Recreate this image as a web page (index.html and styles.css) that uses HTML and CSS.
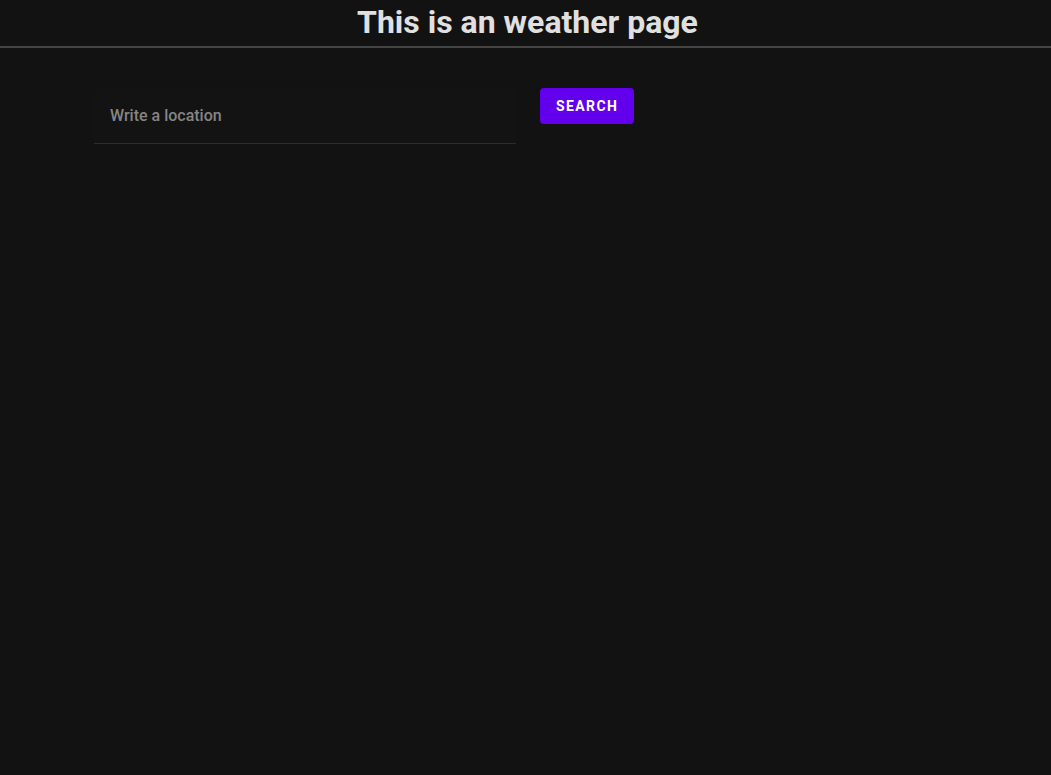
FILE: index.html
```html
<!DOCTYPE html>
<html>
<head>
<meta charset="utf-8">
<link rel="stylesheet" href="styles.css">
</head>
<body>
<header class="header">
  <h1 class="title">This is an weather page</h1>
</header>
<main class="main">
  <div class="field">
    <input class="field-input" type="text" placeholder="Write a location">
  </div>
  <button class="btn">Search</button>
</main>
</body>
</html>
```
FILE: styles.css
```css
html, body {
  margin: 0;
  padding: 0;
  background: #121212;
  height: 100%;
}
body {
  font-family: Roboto, "Liberation Sans", sans-serif;
  color: #e0e0e0;
}
.header {
  border-bottom: 2px solid #444444;
  display: flex;
  justify-content: center;
  align-items: center;
  box-sizing: border-box;
  height: 48px;
  padding-left: 4px;
}
.title {
  margin: 0;
  font-size: 32px;
  font-weight: 700;
  color: #e0e0e0;
  line-height: 1;
  padding-bottom: 3px;
}
.main {
  display: flex;
  align-items: flex-start;
  gap: 24px;
  padding: 40px 94px;
}
.field {
  width: 422px;
  height: 56px;
  background: #131313;
  border-bottom: 1px solid #2c2c2c;
  box-sizing: border-box;
  border-radius: 4px 4px 0 0;
  display: flex;
}
.field-input {
  flex: 1;
  background: transparent;
  border: none;
  outline: none;
  padding: 0 16px;
  font-family: Roboto, "Liberation Sans", sans-serif;
  font-size: 16px;
  font-weight: 500;
  color: #e0e0e0;
}
.field-input::placeholder {
  color: #858585;
}
.btn {
  background: #6200ee;
  color: #ffffff;
  border: none;
  border-radius: 4px;
  height: 36px;
  padding: 0 16px;
  font-family: Roboto, "Liberation Sans", sans-serif;
  font-weight: 700;
  font-size: 14px;
  letter-spacing: 1.4px;
  text-transform: uppercase;
}
```
